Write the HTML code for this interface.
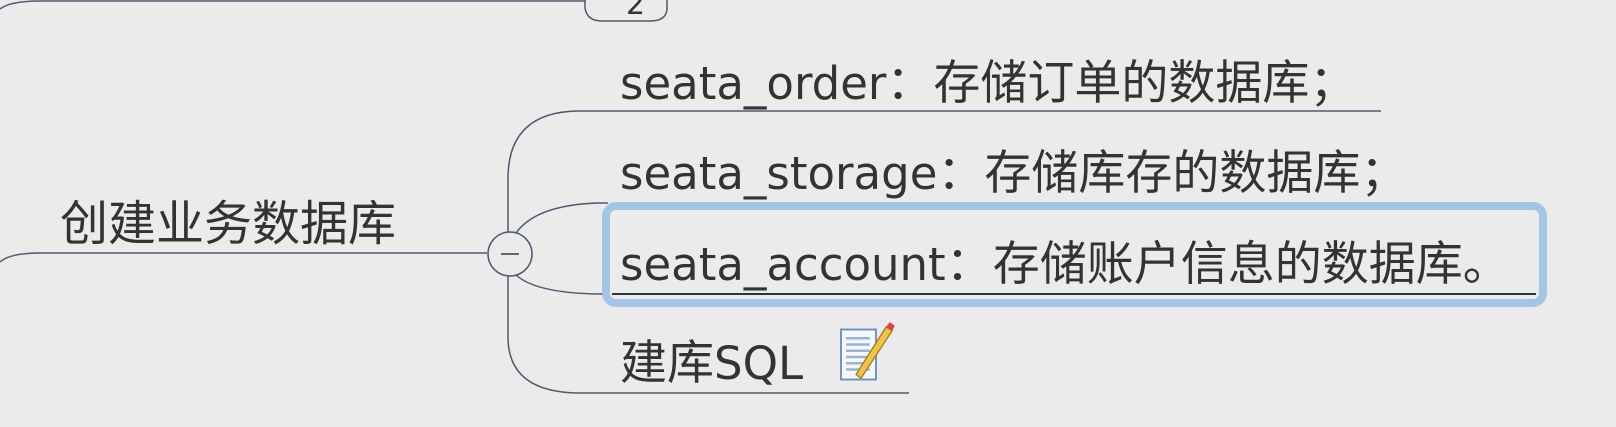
<!DOCTYPE html>
<html><head><meta charset="utf-8"><style>
body{margin:0;width:1616px;height:427px;background:#ebebeb;overflow:hidden;position:relative;font-family:"DejaVu Sans","Noto Sans CJK SC",sans-serif;color:#333}
.t{position:absolute;font-size:45px;line-height:50px;white-space:nowrap}
.c{font-family:"Noto Sans CJK SC",sans-serif;font-size:47px}
svg{position:absolute;left:0;top:0}
</style></head><body>
<svg width="1616" height="427">
<g fill="none" stroke="#4d5a70" stroke-width="1.5">
<path d="M0 9 Q10 1 40 1 L586 1"/>
<path d="M585 -10 L585 8 Q587 21 602 21 L650 21 Q667 21 667 8 L667 -10" fill="#ebebeb"/>
<path d="M0 262 Q10 253 40 253 L487 253"/>
<circle cx="510" cy="254" r="22" fill="#ebebeb"/>
<path d="M508 232 L508 175 Q510 112 578 111 L1381 111"/>
<path d="M508 276 L508 340 Q510 392 578 393 L909 393"/>
<path d="M516 233 Q536 205 598 203 L608 203"/>
<path d="M516 275 Q536 293 598 294 L608 294"/>
<path d="M501 254 L519 254" stroke="#666" stroke-width="2"/>
</g>
<text x="626" y="14" font-family="DejaVu Sans" font-size="30" fill="#333">2</text>
<rect x="606" y="206" width="937" height="97" rx="10" fill="none" stroke="#a5c5e6" stroke-width="8"/>
<path d="M612 294 L1536 294" stroke="#2c3444" stroke-width="2"/>
<g transform="translate(841,322) scale(1.25)">
<rect x="0" y="6" width="28" height="40" fill="#f4f7fb" stroke="#6d8fb5" stroke-width="1.5"/>
<path d="M4 13H23M4 18H23M4 23H23M4 28H23M4 33H23M4 38H23" stroke="#9bb4d4" stroke-width="2"/>
<path d="M12 42 L36 4 L41 7 L16 45 Z" fill="#f0c24a" stroke="#a07a20" stroke-width="1"/>
<path d="M36 4 L41 7 L43 3 L39 0 Z" fill="#d44"/>
</g>
</svg>
<div class="t c" style="left:60px;top:194px;font-size:48px">创建业务数据库</div>
<div class="t" style="left:620px;top:54px">seata_order<span class="c">：存储订单的数据库；</span></div>
<div class="t" style="left:620px;top:144px">seata_storage<span class="c">：存储库存的数据库；</span></div>
<div class="t" style="left:620px;top:235px">seata_account<span class="c">：存储账户信息的数据库。</span></div>
<div class="t" style="left:620px;top:334px"><span class="c">建库</span>SQL</div>
</body></html>
